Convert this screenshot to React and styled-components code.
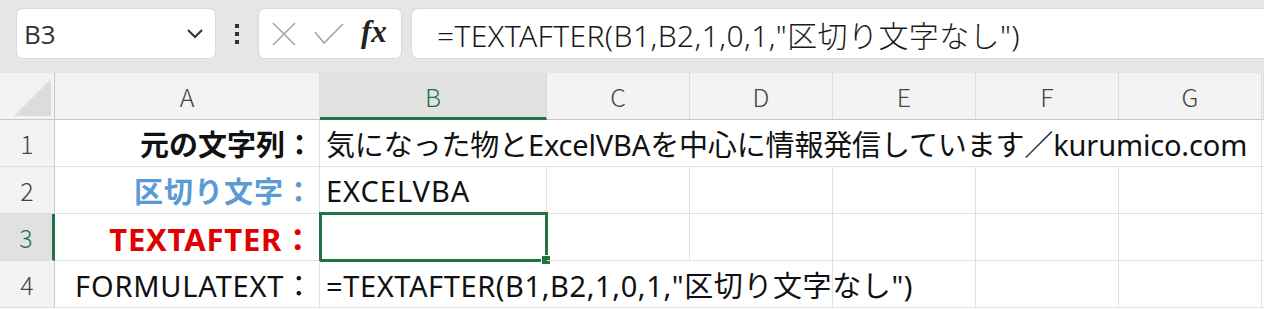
import React from 'react';
import styled, { createGlobalStyle } from 'styled-components';

const GlobalStyle = createGlobalStyle`
  html, body {
    margin: 0;
    padding: 0;
    background: #ffffff;
  }
  body {
    font-family: "Noto Sans", "Noto Sans CJK JP", sans-serif;
    overflow: hidden;
  }
`;

const COLS = ['A', 'B', 'C', 'D', 'E', 'F', 'G'];

const App = () => {
  return (
    <Page>
      <GlobalStyle />
      <Toolbar>
        <NameBox>
          <NameText>B3</NameText>
          <svg width="20" height="12" viewBox="0 0 20 12">
            <polyline points="3,2 10,9 17,2" fill="none" stroke="#333" strokeWidth="2" />
          </svg>
        </NameBox>
        <Dots>
          <svg width="6" height="22" viewBox="0 0 6 22">
            <rect x="1" y="1" width="4" height="4" fill="#333" />
            <rect x="1" y="9" width="4" height="4" fill="#333" />
            <rect x="1" y="17" width="4" height="4" fill="#333" />
          </svg>
        </Dots>
        <FxBox>
          <svg width="26" height="26" viewBox="0 0 26 26">
            <path d="M2 2 L24 24 M24 2 L2 24" stroke="#a6a6a6" strokeWidth="1.6" fill="none" />
          </svg>
          <svg width="32" height="24" viewBox="0 0 32 24">
            <polyline points="2,10 11,21 30,2" stroke="#a6a6a6" strokeWidth="1.6" fill="none" />
          </svg>
          <FxText>fx</FxText>
        </FxBox>
        <FormulaBox>=TEXTAFTER(B1,B2,1,0,1,"区切り文字なし")</FormulaBox>
      </Toolbar>

      <Sheet>
        <Corner>
          <Triangle />
        </Corner>
        {COLS.map((c) => (
          <ColHead key={c} $active={c === 'B'}>{c}</ColHead>
        ))}
        <ColHead />

        <RowHead>1</RowHead>
        <Cell $align="right" $weight={700}>元の文字列：</Cell>
        <Cell $span={6} $spacing="-0.15px">気になった物とExcelVBAを中心に情報発信しています／kurumico.com</Cell>
        <Cell />

        <RowHead>2</RowHead>
        <Cell $align="right" $weight={700} $color="#5b9bd5" $spacing="1px">区切り文字：</Cell>
        <Cell $spacing="1px">EXCELVBA</Cell>
        <Cell /><Cell /><Cell /><Cell /><Cell /><Cell />

        <RowHead $active>3</RowHead>
        <Cell $align="right" $weight={700} $color="#e00000" $size="31px" $spacing="0.8px">TEXTAFTER：</Cell>
        <Cell>
          <Selection>
            <Handle />
          </Selection>
        </Cell>
        <Cell /><Cell /><Cell /><Cell /><Cell /><Cell />

        <RowHead>4</RowHead>
        <Cell $align="right" $spacing="0.8px">FORMULATEXT：</Cell>
        <Cell $span={3} $spacing="0.6px">=TEXTAFTER(B1,B2,1,0,1,"区切り文字なし")</Cell>
        <Cell /><Cell /><Cell /><Cell />
      </Sheet>
    </Page>
  );
};

const Page = styled.div`
  width: 1264px;
  height: 309px;
  overflow: hidden;
  background: #ffffff;
`;

const Toolbar = styled.div`
  height: 73px;
  box-sizing: border-box;
  background: #e6e6e6;
  display: flex;
  align-items: flex-start;
  padding: 8px 0 0 16px;
`;

const NameBox = styled.div`
  width: 200px;
  height: 51px;
  box-sizing: border-box;
  background: #ffffff;
  border-radius: 7px;
  border: 1px solid #dadada;
  display: flex;
  align-items: center;
  justify-content: space-between;
  padding: 0 10px 0 7px;
`;

const NameText = styled.span`
  font-family: "Open Sans", "Noto Sans", sans-serif;
  font-size: 26px;
  color: #333;
`;

const Dots = styled.div`
  width: 42px;
  height: 51px;
  display: flex;
  align-items: center;
  justify-content: center;
`;

const FxBox = styled.div`
  width: 144px;
  height: 51px;
  box-sizing: border-box;
  background: #ffffff;
  border-radius: 7px;
  border: 1px solid #dadada;
  display: flex;
  align-items: center;
  gap: 16px;
  padding: 0 10px 0 12px;
`;

const FxText = styled.span`
  font-family: "Liberation Serif", "DejaVu Serif", serif;
  font-style: italic;
  font-weight: 700;
  font-size: 31px;
  color: #222;
  margin-top: -3px;
`;

const FormulaBox = styled.div`
  flex: 1;
  margin-left: 9px;
  height: 51px;
  box-sizing: border-box;
  background: #ffffff;
  border-radius: 7px 0 0 7px;
  border: 1px solid #dadada;
  border-right: none;
  display: flex;
  align-items: center;
  padding-left: 25px;
  font-family: "Noto Sans", "Noto Sans CJK JP", sans-serif;
  font-size: 30px;
  font-weight: 300;
  letter-spacing: 0.4px;
  color: #1a1a1a;
  white-space: nowrap;
`;

const Sheet = styled.div`
  display: grid;
  grid-template-columns: 55px 265px 227px repeat(5, 143px) 2px;
  grid-template-rows: repeat(5, 47px);
  font-family: "Noto Sans", "Noto Sans CJK JP", sans-serif;
`;

const Corner = styled.div`
  background: #f3f3f3;
  border-right: 1px solid #c8c8c8;
  border-bottom: 1px solid #c8c8c8;
  box-sizing: border-box;
  display: flex;
  align-items: flex-end;
  justify-content: flex-end;
  padding: 0 3px 3px 0;
`;

const Triangle = styled.div`
  width: 37px;
  height: 37px;
  background: #dcdcdc;
  clip-path: polygon(100% 0, 100% 100%, 0 100%);
`;

const ColHead = styled.div`
  box-sizing: border-box;
  background: ${(p) => (p.$active ? '#e1e1e1' : '#f3f3f3')};
  color: ${(p) => (p.$active ? '#217346' : '#444')};
  border-right: 1px solid #dcdcdc;
  border-bottom: ${(p) => (p.$active ? '3px solid #217346' : '1px solid #c8c8c8')};
  display: flex;
  align-items: center;
  justify-content: center;
  font-family: "Noto Sans CJK JP", sans-serif;
  font-size: 25px;
  font-weight: 300;
  padding-top: ${(p) => (p.$active ? '2px' : '0')};
`;

const RowHead = styled.div`
  box-sizing: border-box;
  background: ${(p) => (p.$active ? '#e1e1e1' : '#f3f3f3')};
  color: ${(p) => (p.$active ? '#217346' : '#444')};
  border-right: ${(p) => (p.$active ? '3px solid #217346' : '1px solid #c8c8c8')};
  border-bottom: 1px solid #dcdcdc;
  display: flex;
  align-items: center;
  justify-content: center;
  font-family: "Noto Sans CJK JP", sans-serif;
  font-size: 25px;
  font-weight: 300;
`;

const Cell = styled.div`
  position: relative;
  box-sizing: border-box;
  grid-column: ${(p) => (p.$span ? `span ${p.$span}` : 'auto')};
  border-right: 1px solid #e1e1e1;
  border-bottom: 1px solid #e1e1e1;
  display: flex;
  align-items: center;
  justify-content: ${(p) => (p.$align === 'right' ? 'flex-end' : 'flex-start')};
  padding: 0 5px 0 6px;
  font-size: ${(p) => p.$size || '29px'};
  font-weight: ${(p) => p.$weight || 400};
  letter-spacing: ${(p) => p.$spacing || 'normal'};
  color: ${(p) => p.$color || '#111'};
  white-space: nowrap;
`;

const Selection = styled.div`
  position: absolute;
  top: -2px;
  left: -1px;
  right: -2px;
  bottom: -2px;
  border: 3px solid #217346;
`;

const Handle = styled.div`
  position: absolute;
  right: -6px;
  bottom: -6px;
  width: 8px;
  height: 8px;
  background: #217346;
  border: 1px solid #ffffff;
`;

export default App;
